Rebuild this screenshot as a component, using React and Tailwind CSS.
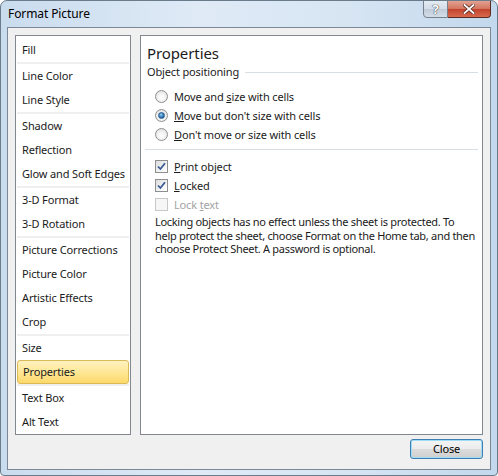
import React from "react";

const groups = [
  ["Fill"],
  ["Line Color", "Line Style"],
  ["Shadow", "Reflection", "Glow and Soft Edges"],
  ["3-D Format", "3-D Rotation"],
  ["Picture Corrections", "Picture Color", "Artistic Effects", "Crop"],
  ["Size", "Properties"],
  ["Text Box", "Alt Text"],
];

function Radio({ checked }) {
  return (
    <span className="relative flex h-[13px] w-[13px] shrink-0 items-center justify-center rounded-full border border-[#8e8f8f] bg-[radial-gradient(circle_at_50%_60%,#ffffff_0%,#f4f4f4_40%,#d6d6d6_100%)]">
      {checked && (
        <span className="h-[7px] w-[7px] rounded-full border border-[#2b5c8e] bg-[radial-gradient(circle_at_40%_35%,#9fd5f5_0%,#3b83c0_45%,#1d4f86_100%)]" />
      )}
    </span>
  );
}

function Check({ checked, disabled }) {
  return (
    <span
      className={
        disabled
          ? "flex h-[13px] w-[13px] shrink-0 items-center justify-center border border-[#c8c8c8] bg-[#f6f6f6]"
          : "flex h-[13px] w-[13px] shrink-0 items-center justify-center border border-[#8e8f8f] bg-[linear-gradient(135deg,#dcdcdc_0%,#f7f7f7_70%,#ffffff_100%)]"
      }
    >
      {checked && (
        <svg width="9" height="9" viewBox="0 0 9 9">
          <path d="M1 4.5 L3.4 7 L8 1.2" fill="none" stroke="#3a5a94" strokeWidth="1.8" />
        </svg>
      )}
    </span>
  );
}

export default function App() {
  return (
    <div className="font-['Noto_Sans',sans-serif] text-[11px] tracking-[-0.15px] text-[#1b1b1b]">
      <div className="flex h-[476px] w-[498px] flex-col overflow-hidden rounded-t-[7px] rounded-b-[4px] border border-[#6a7b8c] bg-[linear-gradient(90deg,#c9dcee_0%,#dfeaf6_40%,#d7e5f3_70%,#c2d8ec_100%)]">
        {/* Title bar */}
        <div className="relative flex h-[26px] shrink-0 items-center pl-[7px]">
          <span className="text-[12px] leading-[14px] tracking-[-0.1px] text-black">Format Picture</span>
          <div className="absolute right-[6px] top-[-1px] flex">
            <div className="flex h-[18px] w-[25px] items-center justify-center rounded-bl-[4px] border border-[#76818c] bg-[linear-gradient(180deg,#e4ebf2_0%,#d3dde8_50%,#bfcbd8_51%,#d2dde8_100%)]">
              <span className="text-[13px] font-bold leading-none text-white [text-shadow:0_0_1px_#333,0_0_1px_#333]">?</span>
            </div>
            <div className="flex h-[18px] w-[43px] items-center justify-center rounded-br-[4px] border border-l-0 border-[#5d2a22] bg-[linear-gradient(180deg,#e2a293_0%,#d4735f_50%,#c2432c_51%,#d76a4f_100%)]">
              <svg width="12" height="10" viewBox="0 0 12 10">
                <path d="M1.5 1 L10.5 9 M10.5 1 L1.5 9" stroke="#5a2a22" strokeWidth="3.4" strokeLinecap="square" />
                <path d="M1.5 1 L10.5 9 M10.5 1 L1.5 9" stroke="#ffffff" strokeWidth="1.8" strokeLinecap="square" />
              </svg>
            </div>
          </div>
        </div>

        {/* Client area */}
        <div className="mx-[6px] mb-[5px] flex flex-1 flex-col border border-[#7d8896] bg-[#f0f0f0] px-[7px] pt-[7px]">
          <div className="flex h-[400px] gap-[9px]">
            {/* Left list */}
            <div className="flex w-[116px] shrink-0 flex-col overflow-hidden border border-[#828790] bg-white pt-[2px]">
              {groups.map((g, gi) => (
                <React.Fragment key={gi}>
                  {gi > 0 && <div className="mx-[1px] h-[2px] bg-[#efefef]" />}
                  {g.map((item) => (
                    <div
                      key={item}
                      className={
                        item === "Properties"
                          ? "mx-[1px] flex h-[24px] items-center rounded-[3px] border border-[#dcb957] bg-[linear-gradient(180deg,#fff2bf_0%,#fee89b_45%,#fdd96a_100%)] pl-[5px]"
                          : "flex h-[24px] items-center pl-[6px]"
                      }
                    >
                      <span className="whitespace-nowrap leading-[14px]">{item}</span>
                    </div>
                  ))}
                </React.Fragment>
              ))}
            </div>

            {/* Right panel */}
            <div className="flex min-w-0 flex-1 flex-col overflow-hidden border border-[#828790] bg-white">
              <div className="pl-[6px] pt-[7px] text-[15px] leading-[20px] tracking-[-0.1px]">Properties</div>
              <div className="mt-[1px] flex h-[16px] items-center pl-[6px] pr-[4px]">
                <span className="whitespace-nowrap leading-[16px]">Object positioning</span>
                <div className="ml-[6px] h-[1px] flex-1 bg-[#d5dfe5]" />
              </div>

              <div className="mt-[7px] flex flex-col pl-[14px]">
                <div className="flex h-[19px] items-center gap-[6px]">
                  <Radio />
                  <span className="leading-[14px]">Move and <u>s</u>ize with cells</span>
                </div>
                <div className="flex h-[19px] items-center gap-[6px]">
                  <Radio checked />
                  <span className="leading-[14px]"><u>M</u>ove but don't size with cells</span>
                </div>
                <div className="flex h-[19px] items-center gap-[6px]">
                  <Radio />
                  <span className="leading-[14px]"><u>D</u>on't move or size with cells</span>
                </div>
              </div>

              <div className="mx-[4px] mt-[5px] h-[1px] bg-[#d5dfe5]" />

              <div className="mt-[7px] flex flex-col pl-[14px]">
                <div className="flex h-[19px] items-center gap-[6px]">
                  <Check checked />
                  <span className="leading-[14px]"><u>P</u>rint object</span>
                </div>
                <div className="flex h-[19px] items-center gap-[6px]">
                  <Check checked />
                  <span className="leading-[14px]"><u>L</u>ocked</span>
                </div>
                <div className="flex h-[19px] items-center gap-[6px]">
                  <Check disabled />
                  <span className="leading-[14px] text-[#a3a3a3]">Lock <u>t</u>ext</span>
                </div>
              </div>

              <p className="mt-[1px] whitespace-nowrap pl-[14px] leading-[13.5px] tracking-[-0.3px]">
                Locking objects has no effect unless the sheet is protected. To
                <br />
                help protect the sheet, choose Format on the Home tab, and then
                <br />
                choose Protect Sheet. A password is optional.
              </p>
            </div>
          </div>

          {/* Footer */}
          <div className="flex justify-end pt-[4px]">
            <button className="flex h-[20px] w-[73px] items-center justify-center rounded-[3px] border border-[#3c7fb1] bg-[linear-gradient(180deg,#f4f4f4_0%,#ececec_50%,#dcdcdc_51%,#cfcfcf_100%)] text-[11px] leading-[14px] text-black shadow-[inset_0_0_0_1px_#9fdcf5]">
              Close
            </button>
          </div>
        </div>
      </div>
    </div>
  );
}
